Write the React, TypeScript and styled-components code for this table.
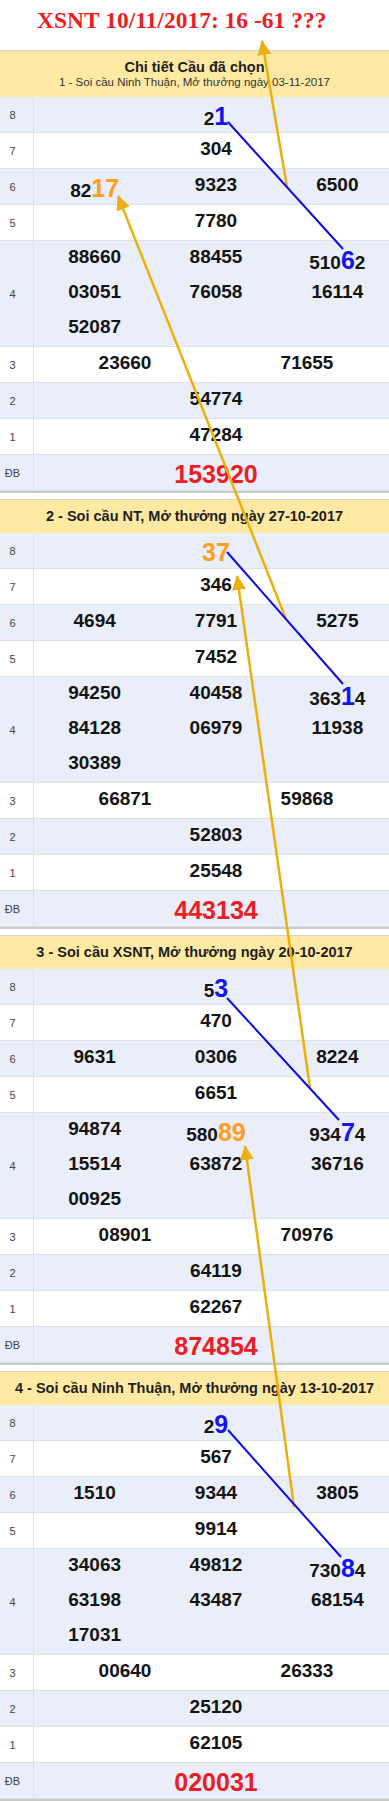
import styled, { createGlobalStyle } from 'styled-components';

const GlobalStyle = createGlobalStyle`
  html, body { margin: 0; padding: 0; background: #fff; }
  body {
    overflow-x: hidden;
    font-family: 'Liberation Sans', Arial, sans-serif;
  }
`;

const Page = styled.div`
  position: relative;
  width: 389px;
  overflow: hidden;
`;

const Title = styled.h1`
  margin: 0;
  height: 50px;
  box-sizing: border-box;
  padding: 7px 0 0 37px;
  font-family: 'Liberation Serif', 'Times New Roman', serif;
  font-size: 23.5px;
  line-height: 26px;
  font-weight: bold;
  color: #ee1d24;
  white-space: nowrap;
`;

const Section = styled.section`
  border-bottom: 2px solid #c9c9c9;
  margin-bottom: 6px;
  &:last-of-type { margin-bottom: 0; }
`;

const Header = styled.div<{ $tall?: boolean }>`
  box-sizing: border-box;
  height: ${({ $tall }) => ($tall ? 47 : 34)}px;
  border-top: 1px solid #d4d4d4;
  background: #ffe9a3;
  display: flex;
  flex-direction: column;
  justify-content: center;
  align-items: center;
  color: #1e1e1e;
  white-space: nowrap;
`;

const HeadTitle = styled.div`
  font-size: 14.5px;
  line-height: 15px;
  font-weight: bold;
`;

const HeadSub = styled.div`
  font-size: 11.5px;
  line-height: 14px;
  color: #333;
`;

const Row = styled.div<{ $shade: boolean }>`
  display: flex;
  background: ${({ $shade }) => ($shade ? '#e9eef8' : '#fff')};
  border-bottom: 1px solid #dde2ea;
`;

const Label = styled.div`
  flex: none;
  width: 34px;
  box-sizing: border-box;
  padding-right: 8px;
  border-right: 1px solid #dde2ea;
  display: flex;
  align-items: center;
  justify-content: center;
  font-size: 11px;
  color: #454545;
`;

const Values = styled.div<{ $cols: number }>`
  flex: none;
  width: 364px;
  display: grid;
  grid-template-columns: repeat(${({ $cols }) => $cols}, 1fr);
  row-gap: 5px;
  padding-top: 5px;
  text-align: center;
`;

const Num = styled.div<{ $special?: boolean }>`
  height: 30px;
  font-size: ${({ $special }) => ($special ? 25 : 19)}px;
  line-height: normal;
  font-weight: bold;
  color: ${({ $special }) => ($special ? '#ee1c25' : '#141414')};
  white-space: nowrap;
`;

const Hl = styled.span<{ $tone: 'blue' | 'orange' }>`
  font-size: 25px;
  color: ${({ $tone }) => ($tone === 'blue' ? '#1414ee' : '#ff9d1e')};
`;

const Overlay = styled.svg`
  position: absolute;
  top: 0;
  left: 0;
  pointer-events: none;
`;

type Prize = { label: string; cols: number; nums: string[]; special?: boolean };
type Draw = { title?: string; caption: string; prizes: Prize[] };

// [x] = blue highlight, {x} = orange highlight
const prizes = (
  g8: string, g7: string, g6: string[], g5: string,
  g4: string[], g3: string[], g2: string, g1: string, db: string,
): Prize[] => [
  { label: '8', cols: 1, nums: [g8] },
  { label: '7', cols: 1, nums: [g7] },
  { label: '6', cols: 3, nums: g6 },
  { label: '5', cols: 1, nums: [g5] },
  { label: '4', cols: 3, nums: g4 },
  { label: '3', cols: 2, nums: g3 },
  { label: '2', cols: 1, nums: [g2] },
  { label: '1', cols: 1, nums: [g1] },
  { label: 'ĐB', cols: 1, nums: [db], special: true },
];

const draws: Draw[] = [
  {
    title: 'Chi tiết Cầu đã chọn',
    caption: '1 - Soi cầu Ninh Thuận, Mở thưởng ngày 03-11-2017',
    prizes: prizes('2[1]', '304', ['82{17}', '9323', '6500'], '7780',
      ['88660', '88455', '510[6]2', '03051', '76058', '16114', '52087'],
      ['23660', '71655'], '54774', '47284', '153920'),
  },
  {
    caption: '2 - Soi cầu NT, Mở thưởng ngày 27-10-2017',
    prizes: prizes('{37}', '346', ['4694', '7791', '5275'], '7452',
      ['94250', '40458', '363[1]4', '84128', '06979', '11938', '30389'],
      ['66871', '59868'], '52803', '25548', '443134'),
  },
  {
    caption: '3 - Soi cầu XSNT, Mở thưởng ngày 20-10-2017',
    prizes: prizes('5[3]', '470', ['9631', '0306', '8224'], '6651',
      ['94874', '580{89}', '934[7]4', '15514', '63872', '36716', '00925'],
      ['08901', '70976'], '64119', '62267', '874854'),
  },
  {
    caption: '4 - Soi cầu Ninh Thuận, Mở thưởng ngày 13-10-2017',
    prizes: prizes('2[9]', '567', ['1510', '9344', '3805'], '9914',
      ['34063', '49812', '730[8]4', '63198', '43487', '68154', '17031'],
      ['00640', '26333'], '25120', '62105', '020031'),
  },
];

function renderNum(s: string) {
  return s.split(/(\[\d+\]|\{\d+\})/).filter(Boolean).map((part, i) => {
    if (part[0] === '[') return <Hl key={i} $tone="blue">{part.slice(1, -1)}</Hl>;
    if (part[0] === '{') return <Hl key={i} $tone="orange">{part.slice(1, -1)}</Hl>;
    return part;
  });
}

const bridges = [
  [228, 122, 343, 249],
  [227, 552, 343, 684],
  [227, 998, 339, 1120],
  [228, 1430, 341, 1557],
];

const arrows = [
  [287, 187, 262, 41],
  [286, 619, 118, 196],
  [310, 1088, 237, 576],
  [294, 1507, 245, 1146],
];

export default function App() {
  return (
    <Page>
      <GlobalStyle />
      <Title>XSNT 10/11/2017: 16 -61 ???</Title>
      {draws.map((d) => (
        <Section key={d.caption}>
          <Header $tall={!!d.title}>
            {d.title ? (
              <>
                <HeadTitle>{d.title}</HeadTitle>
                <HeadSub>{d.caption}</HeadSub>
              </>
            ) : (
              <HeadTitle>{d.caption}</HeadTitle>
            )}
          </Header>
          {d.prizes.map((p, i) => (
            <Row key={p.label} $shade={i % 2 === 0}>
              <Label>{p.label}</Label>
              <Values $cols={p.cols}>
                {p.nums.map((n, j) => (
                  <Num key={j} $special={p.special}>{renderNum(n)}</Num>
                ))}
              </Values>
            </Row>
          ))}
        </Section>
      ))}
      <Overlay width="389" height="1801" viewBox="0 0 389 1801">
        <defs>
          <marker id="tip" markerUnits="userSpaceOnUse" markerWidth="16" markerHeight="14"
            refX="14" refY="7" orient="auto">
            <path d="M0,0 L15,7 L0,14 z" fill="#ebb00e" />
          </marker>
        </defs>
        {arrows.map(([x1, y1, x2, y2], i) => (
          <line key={i} x1={x1} y1={y1} x2={x2} y2={y2}
            stroke="#ebb00e" strokeWidth="2.5" markerEnd="url(#tip)" />
        ))}
        {bridges.map(([x1, y1, x2, y2], i) => (
          <line key={i} x1={x1} y1={y1} x2={x2} y2={y2} stroke="#0b0be2" strokeWidth="2" />
        ))}
      </Overlay>
    </Page>
  );
}
